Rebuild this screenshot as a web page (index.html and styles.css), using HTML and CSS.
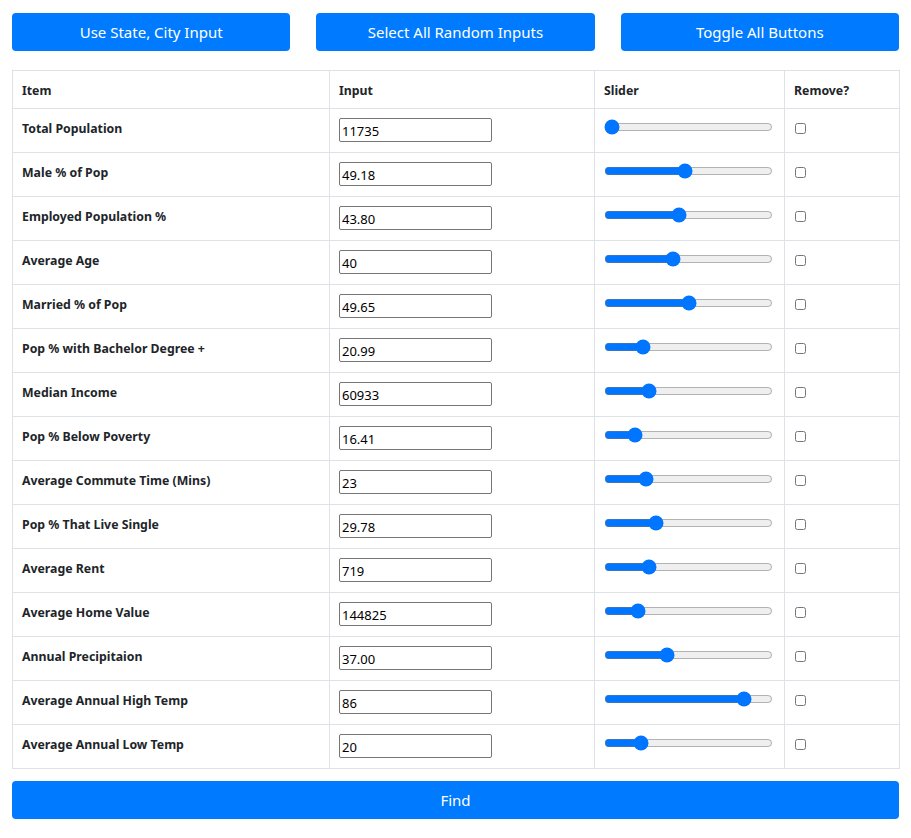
FILE: index.html
```html
<!DOCTYPE html>
<html>
<head>
<meta charset="utf-8">
<link rel="stylesheet" href="styles.css">
</head>
<body>
<div class="page">
  <div class="top-buttons">
    <button class="btn">Use State, City Input</button>
    <button class="btn">Select All Random Inputs</button>
    <button class="btn">Toggle All Buttons</button>
  </div>
  <table class="grid">
    <colgroup><col class="c-item"><col class="c-input"><col class="c-slider"><col class="c-remove"></colgroup>
    <thead>
      <tr><th>Item</th><th>Input</th><th>Slider</th><th>Remove?</th></tr>
    </thead>
    <tbody>
      <tr><th>Total Population</th><td><input class="num" type="text" value="11735"></td><td><input class="range" type="range" min="0" max="100" value="0"></td><td><input type="checkbox"></td></tr>
      <tr><th>Male % of Pop</th><td><input class="num" type="text" value="49.18"></td><td><input class="range" type="range" min="0" max="100" value="48"></td><td><input type="checkbox"></td></tr>
      <tr><th>Employed Population %</th><td><input class="num" type="text" value="43.80"></td><td><input class="range" type="range" min="0" max="100" value="44"></td><td><input type="checkbox"></td></tr>
      <tr><th>Average Age</th><td><input class="num" type="text" value="40"></td><td><input class="range" type="range" min="0" max="100" value="40"></td><td><input type="checkbox"></td></tr>
      <tr><th>Married % of Pop</th><td><input class="num" type="text" value="49.65"></td><td><input class="range" type="range" min="0" max="100" value="50"></td><td><input type="checkbox"></td></tr>
      <tr><th>Pop % with Bachelor Degree +</th><td><input class="num" type="text" value="20.99"></td><td><input class="range" type="range" min="0" max="100" value="20"></td><td><input type="checkbox"></td></tr>
      <tr><th>Median Income</th><td><input class="num" type="text" value="60933"></td><td><input class="range" type="range" min="0" max="100" value="24"></td><td><input type="checkbox"></td></tr>
      <tr><th>Pop % Below Poverty</th><td><input class="num" type="text" value="16.41"></td><td><input class="range" type="range" min="0" max="100" value="15"></td><td><input type="checkbox"></td></tr>
      <tr><th>Average Commute Time (Mins)</th><td><input class="num" type="text" value="23"></td><td><input class="range" type="range" min="0" max="100" value="22"></td><td><input type="checkbox"></td></tr>
      <tr><th>Pop % That Live Single</th><td><input class="num" type="text" value="29.78"></td><td><input class="range" type="range" min="0" max="100" value="29"></td><td><input type="checkbox"></td></tr>
      <tr><th>Average Rent</th><td><input class="num" type="text" value="719"></td><td><input class="range" type="range" min="0" max="100" value="24"></td><td><input type="checkbox"></td></tr>
      <tr><th>Average Home Value</th><td><input class="num" type="text" value="144825"></td><td><input class="range" type="range" min="0" max="100" value="17"></td><td><input type="checkbox"></td></tr>
      <tr><th>Annual Precipitaion</th><td><input class="num" type="text" value="37.00"></td><td><input class="range" type="range" min="0" max="100" value="36"></td><td><input type="checkbox"></td></tr>
      <tr><th>Average Annual High Temp</th><td><input class="num" type="text" value="86"></td><td><input class="range" type="range" min="0" max="100" value="86"></td><td><input type="checkbox"></td></tr>
      <tr><th>Average Annual Low Temp</th><td><input class="num" type="text" value="20"></td><td><input class="range" type="range" min="0" max="100" value="19"></td><td><input type="checkbox"></td></tr>
    </tbody>
  </table>
  <button class="btn find">Find</button>
</div>
</body>
</html>
```
FILE: styles.css
```css
html, body {
  margin: 0;
  padding: 0;
  background: #fff;
}
body {
  font-family: "Noto Sans", "Open Sans", sans-serif;
  color: #212529;
}
.page {
  width: 887px;
  padding: 13px 12px 0 12px;
}
.top-buttons {
  display: flex;
  gap: 26px;
  margin-bottom: 19px;
}
.btn {
  flex: 1;
  height: 38px;
  border: none;
  border-radius: 4px;
  background: #007bff;
  color: #fff;
  font-family: inherit;
  font-size: 15px;
  padding: 0;
  cursor: pointer;
}
.grid {
  width: 887px;
  table-layout: fixed;
  border-collapse: collapse;
  font-size: 12.3px;
}
.c-item { width: 317px; }
.c-input { width: 265px; }
.c-slider { width: 190px; }
.c-remove { width: 115px; }
.grid th, .grid td {
  border: 1px solid #dee2e6;
  text-align: left;
  vertical-align: top;
  padding: 9px 10px 0 9px;
}
.grid thead th {
  padding-top: 10px;
  height: 27px;
  line-height: 19px;
}
.grid tbody th, .grid tbody td {
  height: 34px;
  line-height: 20px;
}
.grid tbody th {
  padding-top: 10px;
  height: 33px;
}
.grid th { font-weight: 700; }
.num {
  box-sizing: border-box;
  width: 153px;
  height: 24px;
  margin: 0;
  padding: 1px 2px 0 2px;
  border: 1px solid #767676;
  border-radius: 2px;
  font-family: inherit;
  font-size: 13px;
  color: #000;
  display: block;
}
.range {
  width: 169px;
  margin: 1px 0 0 0;
  display: block;
}
.grid input[type="checkbox"] {
  width: 11px;
  height: 11px;
  margin: 5px 0 0 1px;
  display: block;
}
.find {
  display: block;
  width: 887px;
  margin-top: 12px;
  flex: none;
}
```
